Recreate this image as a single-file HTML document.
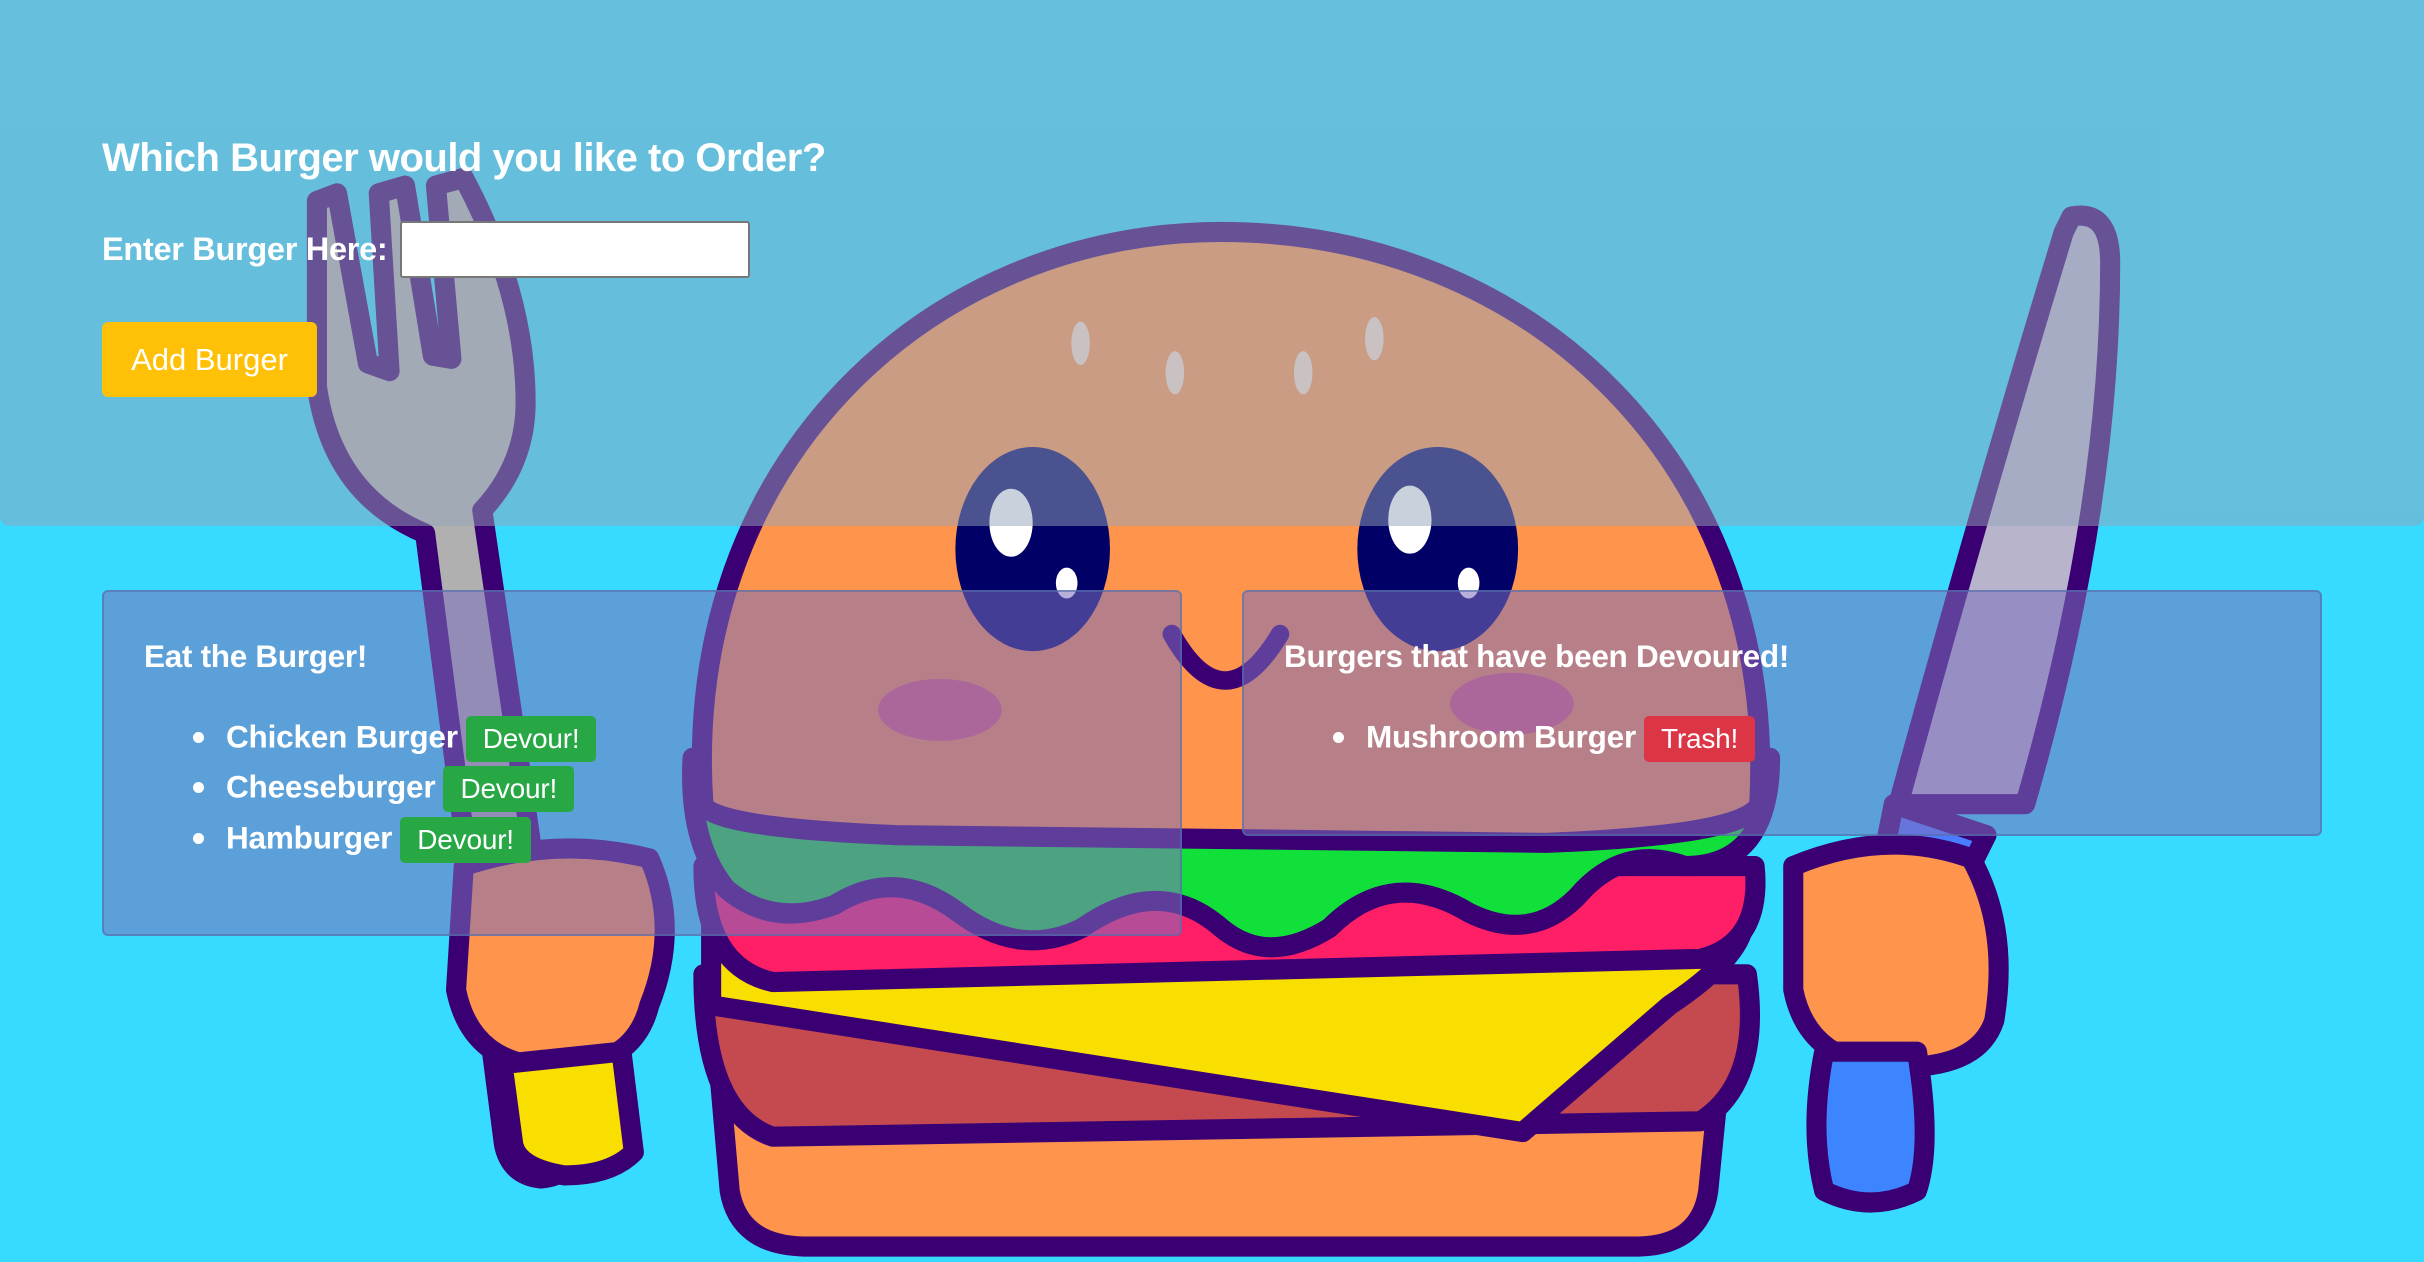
<!DOCTYPE html>
<html><head><meta charset="utf-8"><style>
html,body{margin:0;padding:0;width:2424px;height:1262px;overflow:hidden;background:#37dbff;font-family:"Liberation Sans",sans-serif;color:#fff}
svg.bg{position:absolute;left:0;top:0;width:2424px;height:1262px}
.top{position:absolute;left:0;top:0;width:2424px;height:526px;background:rgba(148,163,185,0.5);border-radius:0 0 10px 10px}
h1{position:absolute;left:102px;top:136px;margin:0;font-size:40px;font-weight:bold;letter-spacing:-0.5px}
.lbl{position:absolute;left:102px;top:231px;font-size:32.5px;font-weight:bold;letter-spacing:-0.3px}
.inp{position:absolute;left:400px;top:221px;width:346px;height:53px;background:#fff;border:2px solid #777;border-radius:3px}
.add{position:absolute;left:102px;top:322px;width:215px;height:75px;background:#ffc107;border-radius:6px;font-size:31px;line-height:75px;text-align:center}
.card{position:absolute;background:rgba(124,111,187,0.55);border:2px solid rgba(80,110,170,0.6);border-radius:6px}
.card h2{position:absolute;left:40px;top:46px;margin:0;font-size:31.5px;font-weight:bold;letter-spacing:-0.3px}
.item{position:absolute;font-size:31.5px;font-weight:bold;letter-spacing:-0.2px;white-space:nowrap}
.item:before{content:"";position:absolute;left:-33px;top:16px;width:11px;height:11px;border-radius:50%;background:#fff}
.btn{display:inline-block;vertical-align:middle;margin-left:8px;padding:0 17px;height:46px;line-height:46px;border-radius:5px;font-weight:normal;font-size:28px}
.g{background:#28a745}.r{background:#dc3545}
</style></head><body>
<svg class="bg" viewBox="0 0 1568 816" preserveAspectRatio="none">
<g stroke="#3a0073" stroke-width="13" stroke-linejoin="round">
<path d="M205,130 L218,125 L238,235 L252,240 L245,125 L262,120 L280,230 L292,232 L282,120 L300,115 Q340,190 340,260 Q340,300 312,330 L372,740 Q372,760 350,762 Q330,760 326,740 L275,345 Q215,320 205,250 Z" fill="#b0b0b0"/>
<path d="M300,560 Q360,540 420,555 Q440,600 420,650 Q410,690 360,690 Q305,690 295,640 Z" fill="#ff944d"/>
<path d="M325,688 L402,680 L410,745 Q395,760 365,760 Q335,755 332,740 Z" fill="#f8df00"/>
<path d="M1340,140 Q1365,135 1365,170 Q1365,330 1310,520 L1228,520 Q1280,330 1335,150 Z" fill="#b8b4cc"/>
<path d="M1225,520 L1285,540 L1275,560 L1220,545 Z" fill="#4a7cff"/>
<path d="M1160,560 Q1220,535 1275,555 Q1300,600 1290,660 Q1280,690 1230,690 Q1170,690 1160,640 Z" fill="#ff944d"/>
<path d="M1180,680 L1240,680 Q1250,740 1240,770 Q1210,785 1180,770 Q1170,730 1180,680 Z" fill="#3d85ff"/>
<path d="M465,690 Q460,670 500,668 L1080,668 Q1115,670 1112,700 L1105,770 Q1100,805 1060,806 L520,806 Q478,805 472,770 Z" fill="#ff944d"/>
<path d="M455,630 L1130,630 Q1140,700 1100,725 L500,735 Q455,720 455,630 Z" fill="#c44a50"/>
<path d="M460,598 L1128,598 Q1125,620 1080,650 L985,732 L460,650 Z" fill="#f8df00"/>
<path d="M455,560 L1135,560 Q1140,610 1100,620 L500,635 Q455,625 455,560 Z" fill="#ff1f66"/>
<path d="M448,490 L1145,490 Q1145,560 1090,560 Q1050,545 1020,580 Q990,610 950,590 Q900,560 860,600 Q820,625 790,600 Q750,565 700,600 Q660,620 620,590 Q580,560 540,585 Q500,600 470,575 Q445,545 448,490 Z" fill="#12e03a"/>
<path d="M455,520 C440,300 600,150 790,150 C990,150 1150,300 1138,520 Q1130,540 1000,545 L580,540 Q460,535 455,520 Z" fill="#ff944d"/>
</g>
<ellipse cx="668" cy="355" rx="50" ry="66" fill="#000066"/>
<ellipse cx="930" cy="355" rx="52" ry="66" fill="#000066"/>
<ellipse cx="654" cy="338" rx="14" ry="22" fill="#fff"/>
<ellipse cx="912" cy="336" rx="14" ry="22" fill="#fff"/>
<ellipse cx="690" cy="377" rx="7" ry="10" fill="#fff"/>
<ellipse cx="950" cy="377" rx="7" ry="10" fill="#fff"/>
<ellipse cx="608" cy="459" rx="40" ry="20" fill="#e0507a" opacity="0.8"/>
<ellipse cx="978" cy="455" rx="40" ry="20" fill="#e0507a" opacity="0.8"/>
<path d="M758,410 Q792,470 828,410" fill="none" stroke="#3a0073" stroke-width="12" stroke-linecap="round"/>
<g fill="#fff" opacity="0.7"><ellipse cx="699" cy="222" rx="6" ry="14"/><ellipse cx="760" cy="241" rx="6" ry="14"/><ellipse cx="843" cy="241" rx="6" ry="14"/><ellipse cx="889" cy="219" rx="6" ry="14"/></g>
</svg>
<div class="top"></div>
<h1>Which Burger would you like to Order?</h1>
<div class="lbl">Enter Burger Here:</div>
<div class="inp"></div>
<div class="add">Add Burger</div>
<div class="card" style="left:102px;top:590px;width:1076px;height:342px">
<h2>Eat the Burger!</h2>
<div class="item" style="left:122px;top:124px">Chicken Burger<span class="btn g">Devour!</span></div>
<div class="item" style="left:122px;top:174px">Cheeseburger<span class="btn g">Devour!</span></div>
<div class="item" style="left:122px;top:225px">Hamburger<span class="btn g">Devour!</span></div>
</div>
<div class="card" style="left:1242px;top:590px;width:1076px;height:242px">
<h2>Burgers that have been Devoured!</h2>
<div class="item" style="left:122px;top:124px">Mushroom Burger<span class="btn r">Trash!</span></div>
</div>
</body></html>
